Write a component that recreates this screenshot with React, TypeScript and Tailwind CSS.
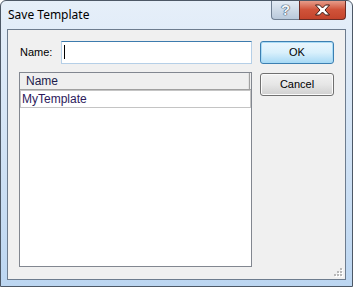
const uiFont = { fontFamily: '"Liberation Sans", Arial, sans-serif' };

function ResizeGrip() {
  const dots = [
    [6, 0],
    [3, 3],
    [6, 3],
    [0, 6],
    [3, 6],
    [6, 6],
  ];
  return (
    <svg width="9" height="9" viewBox="0 0 9 9" className="block">
      {dots.map(([x, y]) => (
        <g key={`${x}-${y}`}>
          <rect x={x + 1} y={y + 1} width="2" height="2" fill="#ffffff" />
          <rect x={x} y={y} width="2" height="2" fill="#b8b8b8" />
        </g>
      ))}
    </svg>
  );
}

function CaptionButtons() {
  return (
    <div className="flex -mt-px">
      <div className="w-[28px] h-[20px] flex items-center justify-center rounded-bl-[4px] border border-[#6f7f92] border-t-0 border-r-0 bg-gradient-to-b from-[#e6eef7] via-[#cfdbe8] to-[#b9c9db]">
        <span
          className="text-[15px] font-bold leading-none text-[#f4f7fb]"
          style={{ ...uiFont, textShadow: '0 0 1px #34465c, 0 0 1px #34465c, 0 0 1px #34465c' }}
        >
          ?
        </span>
      </div>
      <div className="w-[47px] h-[20px] flex items-center justify-center rounded-br-[4px] border border-[#6b2c25] border-t-0 bg-gradient-to-b from-[#e8a493] via-[#d0533a] to-[#c4442c]">
        <svg width="17" height="12" viewBox="0 0 17 12">
          <path
            d="M1.5 1 L5.5 1 L8.5 4 L11.5 1 L15.5 1 L11 6 L15.5 11 L11.5 11 L8.5 8 L5.5 11 L1.5 11 L6 6 Z"
            fill="#ffffff"
            stroke="#3b1a14"
            strokeWidth="1"
            strokeLinejoin="round"
          />
        </svg>
      </div>
    </div>
  );
}

function DialogButton({ label, isDefault }: { label: string; isDefault?: boolean }) {
  return (
    <button
      className={`w-[74px] h-[23px] rounded-[3px] border text-[11px] text-black flex items-center justify-center ${
        isDefault
          ? 'border-[#3c7fb1] bg-gradient-to-b from-[#eaf6fd] via-[#d9f0fc] to-[#a7d9f5] shadow-[inset_0_0_0_1px_#a8dbf6]'
          : 'border-[#707070] bg-gradient-to-b from-[#f2f2f2] via-[#e6e6e6] to-[#d0d0d0] shadow-[inset_0_0_0_1px_#fbfbfb]'
      }`}
      style={uiFont}
    >
      {label}
    </button>
  );
}

export default function App() {
  return (
    <div
      className="w-[353px] h-[287px] flex flex-col border border-[#4d5866] rounded-t-[6px] bg-gradient-to-b from-[#e6eff9] via-[#d2e3f5] to-[#bcd6f1] overflow-hidden"
      style={uiFont}
    >
      {/* title bar */}
      <div className="h-[28px] flex justify-between pl-[7px] pr-[6px]">
        <div
          className="pt-[5px] text-[12px] text-black"
          style={{ fontFamily: '"Noto Sans", "Open Sans", sans-serif' }}
        >
          Save Template
        </div>
        <CaptionButtons />
      </div>

      {/* client area */}
      <div className="mx-[6px] h-[251px] border border-[#6d7c8e] bg-[#f0f0f0] flex flex-col">
        <div className="flex gap-[8px] pt-[11px] pl-[11px]">
          <div className="w-[233px] flex flex-col">
            <div className="h-[23px] flex items-center">
              <span className="ml-px w-[41px] text-[11px] text-black">Name:</span>
              <div className="relative w-[191px] h-[23px] bg-white border border-[#b5cfe7] border-t-[#3d7bad]">
                <div className="absolute left-[2px] top-[3px] w-px h-[14px] bg-black" />
              </div>
            </div>
            <div className="mt-[8px] h-[195px] border border-[#828790] bg-white flex flex-col">
              <div className="flex">
                <div className="w-[230px] h-[17px] flex items-center pl-[6px] bg-[#efefef] border-b border-r border-[#a0a0a0] shadow-[inset_-1px_0_0_#e3e3e3] text-[12px] text-[#1c1c4c]">
                  Name
                </div>
                <div className="flex-1 h-[17px] bg-[#efefef] border-b border-[#a0a0a0]" />
              </div>
              <div className="h-[18px] flex items-center pl-px border border-[#c4c4c4] text-[12px] text-[#2c1a5c]">
                MyTemplate
              </div>
            </div>
          </div>
          <div className="flex flex-col gap-[9px]">
            <DialogButton label="OK" isDefault />
            <DialogButton label="Cancel" />
          </div>
        </div>
        <div className="mt-auto flex justify-end pr-[2px] pb-[2px]">
          <ResizeGrip />
        </div>
      </div>
    </div>
  );
}
